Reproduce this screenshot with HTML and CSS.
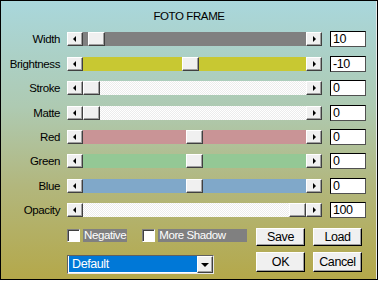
FILE: index.html
```html
<!DOCTYPE html>
<html lang="en">

<head>
    <meta charset="UTF-8">
    <meta name="viewport" content="width=device-width, initial-scale=1.0">
    <title>Foto Frame</title>
    <link rel="stylesheet" href="styles.css">
</head>

<body>
    <div class="frame">
        <div class="title">FOTO FRAME</div>

        <div class="rows">
            <div class="label">Width</div>
            <div class="scroll">
                <span class="arrow left"></span>
                <div class="track gray"><span class="thumb" style="margin-left:5px"></span></div>
                <span class="arrow right"></span>
            </div>
            <div class="value">10</div>

            <div class="label">Brightness</div>
            <div class="scroll">
                <span class="arrow left"></span>
                <div class="track yellow"><span class="thumb" style="margin-left:99px"></span></div>
                <span class="arrow right"></span>
            </div>
            <div class="value">-10</div>

            <div class="label">Stroke</div>
            <div class="scroll">
                <span class="arrow left"></span>
                <div class="track white"><span class="thumb" style="margin-left:0px"></span></div>
                <span class="arrow right"></span>
            </div>
            <div class="value">0</div>

            <div class="label">Matte</div>
            <div class="scroll">
                <span class="arrow left"></span>
                <div class="track white"><span class="thumb" style="margin-left:0px"></span></div>
                <span class="arrow right"></span>
            </div>
            <div class="value">0</div>

            <div class="label">Red</div>
            <div class="scroll">
                <span class="arrow left"></span>
                <div class="track red"><span class="thumb" style="margin-left:103px"></span></div>
                <span class="arrow right"></span>
            </div>
            <div class="value">0</div>

            <div class="label">Green</div>
            <div class="scroll">
                <span class="arrow left"></span>
                <div class="track green"><span class="thumb" style="margin-left:103px"></span></div>
                <span class="arrow right"></span>
            </div>
            <div class="value">0</div>

            <div class="label">Blue</div>
            <div class="scroll">
                <span class="arrow left"></span>
                <div class="track blue"><span class="thumb" style="margin-left:103px"></span></div>
                <span class="arrow right"></span>
            </div>
            <div class="value">0</div>

            <div class="label">Opacity</div>
            <div class="scroll">
                <span class="arrow left"></span>
                <div class="track white"><span class="thumb" style="margin-left:206px"></span></div>
                <span class="arrow right"></span>
            </div>
            <div class="value">100</div>
        </div>

        <div class="bottom">
            <div class="checks">
                <div class="check"><span class="box"></span><span class="text">Negative</span></div>
                <div class="check"><span class="box"></span><span class="text wide">More Shadow</span></div>
            </div>
            <div class="btn">Save</div>
            <div class="btn">Load</div>

            <div class="combo">
                <span class="combo-text">Default</span>
                <span class="combo-btn"></span>
            </div>
            <div class="btn big">OK</div>
            <div class="btn big">Cancel</div>
        </div>
    </div>
</body>

</html>
```

FILE: styles.css
```css
html,
body {
    margin: 0;
    padding: 0;
    background: #ffffff;
}

body {
    font-family: "Liberation Sans", Arial, sans-serif;
    font-size: 11.5px;
    letter-spacing: -0.4px;
    color: #000;
}

.frame {
    width: 378px;
    height: 280px;
    box-sizing: border-box;
    border: 1px solid #000;
    box-shadow: inset -1px 0 0 #e8e8e8;
    background: linear-gradient(#a9d7dc 0%, #aecab2 38%, #b2b77e 66%, #b4a84a 100%);
}

.title {
    text-align: center;
    font-size: 11.5px;
    line-height: 14px;
    padding-top: 8px;
    height: 18.3px;
}

/* slider rows */
.rows {
    display: grid;
    grid-template-columns: 66px 263px 36px;
    grid-auto-rows: 24.36px;
    align-items: center;
}

.label {
    text-align: right;
    padding-right: 7px;
    line-height: 14px;
}

.scroll {
    display: flex;
    width: 255px;
    height: 14px;
}

.arrow {
    width: 16px;
    height: 14px;
    box-sizing: border-box;
    background: #f0f0f0;
    border: 1px solid;
    border-color: #fff #404040 #404040 #fff;
    box-shadow: inset -1px -1px 0 #a0a0a0;
    display: flex;
    align-items: center;
    justify-content: center;
}

.arrow::before {
    content: "";
    border-top: 3px solid transparent;
    border-bottom: 3px solid transparent;
}

.arrow.left::before {
    border-right: 3px solid #000;
    margin-right: 1px;
}

.arrow.right::before {
    border-left: 3px solid #000;
    margin-left: 1px;
}

.track {
    flex: 1;
    display: flex;
}

.track.gray { background: #808080; }
.track.yellow { background: #c8c832; }
.track.red { background: #c99496; }
.track.green { background: #94c895; }
.track.blue { background: #80a8c9; }
.track.white {
    background: repeating-conic-gradient(#ffffff 0 25%, #ececec 0 50%) 0 0 / 2px 2px;
}

.thumb {
    width: 17px;
    height: 14px;
    box-sizing: border-box;
    background: #f0f0f0;
    border: 1px solid;
    border-color: #fff #404040 #404040 #fff;
    box-shadow: inset -1px -1px 0 #a0a0a0;
}

.value {
    height: 16px;
    box-sizing: border-box;
    background: #fff;
    border: 1px solid;
    border-color: #000 #505050 #505050 #000;
    padding-left: 2px;
    font-size: 12.5px;
    line-height: 14px;
}

/* bottom controls */
.bottom {
    display: grid;
    grid-template-columns: 181px 49px 49px;
    grid-template-rows: 18px 20px;
    column-gap: 8px;
    row-gap: 6px;
    margin: 6px 0 0 66px;
}

.checks {
    display: flex;
    align-items: center;
    gap: 15px;
    align-self: start;
    margin-top: 1px;
}

.check {
    display: flex;
    gap: 3px;
}

.box {
    width: 13px;
    height: 13px;
    box-sizing: border-box;
    background: #fff;
    border: 1px solid;
    border-color: #808080 #fff #fff #808080;
    box-shadow: inset 1px 1px 0 #404040;
}

.check .text {
    background: #808080;
    color: #fff;
    height: 13px;
    line-height: 13px;
    padding: 0 1px;
}

.check .text.wide {
    width: 89px;
    box-sizing: border-box;
}

.btn {
    box-sizing: border-box;
    background: #f0f0f0;
    border: 1px solid;
    border-color: #fff #000 #000 #fff;
    box-shadow: inset -1px -1px 0 #a0a0a0;
    text-align: center;
    font-size: 12.5px;
    line-height: 16px;
}

.btn.big {
    line-height: 18px;
}

.combo {
    width: 147px;
    height: 19px;
    box-sizing: border-box;
    margin-top: 3px;
    display: flex;
    background: #0078d7;
    border: 1px solid;
    border-color: #606060 #e8e8e8 #e8e8e8 #606060;
    box-shadow: inset 1px 0 0 #fff, inset 0 -1px 0 #fff;
}

.combo-text {
    flex: 1;
    color: #fff;
    padding-left: 4px;
    font-size: 12.5px;
    line-height: 17px;
}

.combo-btn {
    width: 16px;
    box-sizing: border-box;
    background: #f0f0f0;
    border: 1px solid;
    border-color: #fff #404040 #404040 #fff;
    box-shadow: inset -1px -1px 0 #a0a0a0;
    display: flex;
    align-items: center;
    justify-content: center;
}

.combo-btn::before {
    content: "";
    border-left: 4px solid transparent;
    border-right: 4px solid transparent;
    border-top: 4px solid #000;
}
```
